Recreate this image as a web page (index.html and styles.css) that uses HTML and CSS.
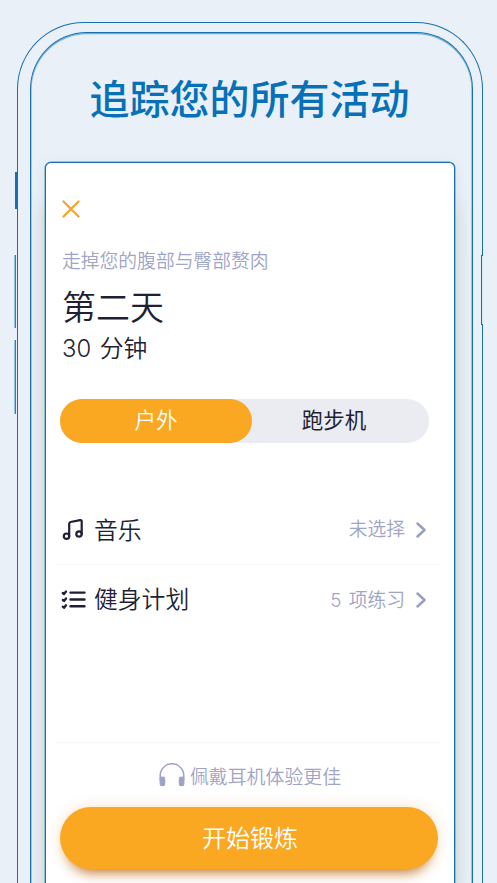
FILE: index.html
```
<!DOCTYPE html>
<html lang="zh-CN">
<head>
<meta charset="utf-8">
<title>追踪您的所有活动</title>
<link rel="stylesheet" href="styles.css">
</head>
<body>
<div class="phone">
  <i class="key key-mute"></i><i class="key key-up"></i><i class="key key-down"></i><i class="key key-power"></i>
  <div class="bezel">
    <h1 class="headline">追踪您的所有活动</h1>
    <main class="screen">
      <svg class="close" viewBox="0 0 18 18"><path d="M1.5 1.5l15 15M16.5 1.5l-15 15"/></svg>
      <p class="program">走掉您的腹部与臀部赘肉</p>
      <h2 class="day">第二天</h2>
      <p class="duration">30 分钟</p>
      <div class="tabs"><span class="tab active">户外</span><span class="tab">跑步机</span></div>
      <div class="rows">
        <div class="row">
          <svg class="icon" viewBox="0 0 26 26"><circle cx="5.5" cy="19.2" r="2.7"/><circle cx="18" cy="17" r="2.7"/><path d="M8.2 19.2V6.8q0-1.5 1.4-1.8l9.5-1.8q1.6-.3 1.6 1.4V17"/></svg>
          <span class="label">音乐</span><span class="value">未选择</span>
          <svg class="chevron" viewBox="0 0 10 16"><path d="M1.5 1.5L8.5 8l-7 6.5"/></svg>
        </div>
        <div class="row">
          <svg class="icon list" viewBox="0 0 26 26"><path d="M9.5 5.6h14M9.5 12.5h14M9.5 19.3h14M1.8 6l1.2 1 2-2.4M1.8 12.9l1.2 1 2-2.4M1.8 19.7l1.2 1 2-2.4"/></svg>
          <span class="label">健身计划</span><span class="value">5 项练习</span>
          <svg class="chevron" viewBox="0 0 10 16"><path d="M1.5 1.5L8.5 8l-7 6.5"/></svg>
        </div>
      </div>
      <div class="tip">
        <svg class="headphones" viewBox="0 0 26 24"><path class="band" d="M1.2 17V12.5a11.8 11.8 0 0 1 23.6 0V17"/><rect x=".6" y="13.5" width="5.6" height="9.8" rx="2.4"/><rect x="19.8" y="13.5" width="5.6" height="9.8" rx="2.4"/></svg>
        <span>佩戴耳机体验更佳</span>
      </div>
      <div class="start">开始锻炼</div>
    </main>
  </div>
</div>
</body>
</html>
```
FILE: styles.css
```
* { box-sizing: border-box; }
html, body { height: 883px; margin: 0; overflow: hidden; }
body { display: flow-root; background: #e9f0f7; color: #211f35; font-family: "Inter", "Noto Sans CJK SC", sans-serif; font-weight: 350; }
h1, h2, p { margin: 0; font-weight: 350; white-space: nowrap; }
svg { display: block; fill: none; stroke-linecap: round; stroke-linejoin: round; flex: none; }
.phone { position: relative; width: 466px; height: 861px; margin: 22px 0 0 17px; padding: 9px 9px 0 12px; border: 1px solid #176fae; border-bottom: 0; border-radius: 67px 67px 0 0; }
.bezel { height: 851px; padding: 0 17px 0 14px; border: 1px solid #176fae; border-bottom: 0; border-radius: 57px 57px 0 0; box-shadow: inset 0 .6px 0 .6px #6dafd9; overflow: hidden; }
.key { position: absolute; border: 1px solid #176fae; }
.key-mute { left: -3px; top: 149px; width: 3px; height: 37px; background: #176fae; }
.key-up, .key-down { left: -4px; width: 2px; border-width: 0 1px 0 0; border-color: #2f82bd; background: #8fc1e2; }
.key-up { top: 232px; height: 73px; }
.key-down { top: 317px; height: 74px; }
.key-power { right: -1px; top: 232px; width: 2px; height: 70px; border-right: 0; background: #d5eaf7; }
.headline { height: 129px; margin-left: -1px; padding-top: 36px; color: #0670b9; font-size: 40px; font-weight: 500; line-height: 61px; text-align: center; }
.screen { width: 410px; height: 721px; padding: 37px 14px 0; background: #fff; border: 1px solid #176fae; border-bottom: 0; border-radius: 6px 6px 0 0; box-shadow: 0 0 0 .5px #4b9bca, 0 44px 18px 2px rgba(120, 100, 60, .15), 0 4px 14px rgba(80, 80, 90, .1); }
.close { width: 18px; height: 18px; margin-left: 2px; stroke: #f5a52b; stroke-width: 2.3; }
.program { margin: 29px 0 0 2px; color: #a0a5c6; font-size: 18.8px; line-height: 30px; }
.day { margin: 6px 0 0 2px; font-size: 34px; line-height: 50px; }
.duration { margin: -1px 0 0 2px; font-size: 23.8px; line-height: 34px; word-spacing: 2px; }
.tabs { display: grid; grid-template-columns: 192px 177px; width: 369px; height: 44px; margin-top: 33px; border-radius: 22px; background: #ebecf2; }
.tab { padding-right: 13px; font-size: 21.5px; line-height: 43px; text-align: center; font-weight: 400; }
.active { padding: 0; border-radius: 22px; background: #faa722; color: #fff; font-weight: 350; }
.rows { margin: 52px -1px 0 -4px; }
.row { display: flex; align-items: center; height: 70px; padding: 0 15px 0 5px; border-bottom: 1px solid #f7f7f9; }
.row:last-child { border: 0; }
.icon { width: 26px; height: 26px; margin-right: 7px; stroke: #211f35; stroke-width: 2.2; }
.list { stroke-width: 2.4; }
.label { padding-top: 2px; font-size: 23.8px; line-height: 36px; }
.row:last-child .label { padding-top: 0; }
.value { margin-left: auto; color: #a0a5c6; font-size: 18.8px; line-height: 30px; word-spacing: 2px; }
.row:last-child .value { padding-top: 1px; }
.chevron { width: 10px; height: 16px; margin-left: 11px; stroke: #999fc4; stroke-width: 2.5; }
.tip { display: flex; align-items: center; justify-content: center; height: 65px; margin: 107px -1px 0 -4px; padding-left: 3px; border-top: 1px solid #f7f7f9; color: #a0a5c6; font-size: 18.9px; gap: 5px; }
.headphones { width: 26px; height: 24px; fill: #9fa4c6; }
.band { fill: none; stroke: #9fa4c6; stroke-width: 1.5; }
.start { width: 378px; height: 62px; padding-left: 2px; border-radius: 31px; background: #faa722; box-shadow: 0 12px 14px -10px #b96716, 0 0 14px rgba(225, 140, 34, .25); color: #fff; font-size: 24px; line-height: 64px; text-align: center; }
```
